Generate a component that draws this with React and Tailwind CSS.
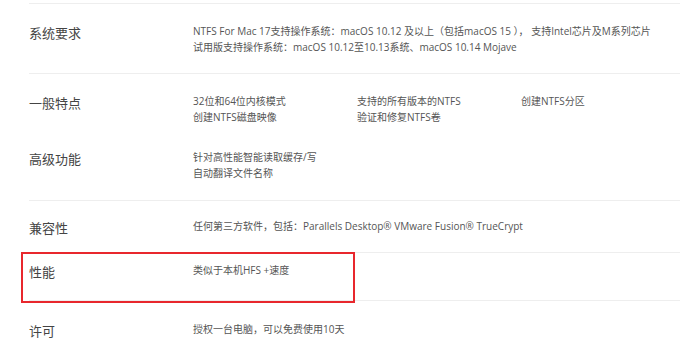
import React from "react"

const font = { fontFamily: '"Noto Sans CJK SC", "Noto Sans", sans-serif' }
const latin = { fontFamily: '"Open Sans", "Noto Sans CJK SC", sans-serif' }

function Row({ label, children, className = "", pad = "pt-[19px]" }) {
  return (
    <div className={`flex ml-[29px] ${className}`}>
      <div className={`w-[164px] shrink-0 text-[13px] leading-[20px] text-[#444] ${pad}`}>
        {label}
      </div>
      <div className={`text-[10px] leading-[16px] text-[#555] ${pad}`} style={latin}>
        {children}
      </div>
    </div>
  )
}

export default function App() {
  return (
    <div className="w-[680px] h-[360px] bg-white overflow-hidden" style={font}>
      <div className="pt-[3px]">
        <Row label="系统要求" className="h-[70px] border-t border-[#eeeeee]">
          <p>NTFS For Mac 17支持操作系统：macOS 10.12 及以上（包括macOS 15 ）， 支持Intel芯片及M系列芯片</p>
          <p>试用版支持操作系统：macOS 10.12至10.13系统、macOS 10.14 Mojave</p>
        </Row>

        <Row label="一般特点" className="h-[57px] border-t border-[#eeeeee]">
          <div className="grid grid-cols-[164px_164px_auto]">
            <p>32位和64位内核模式</p>
            <p>支持的所有版本的NTFS</p>
            <p>创建NTFS分区</p>
            <p>创建NTFS磁盘映像</p>
            <p>验证和修复NTFS卷</p>
          </div>
        </Row>

        <Row label="高级功能" className="h-[70px]">
          <p>针对高性能智能读取缓存/写</p>
          <p>自动翻译文件名称</p>
        </Row>

        <Row label="兼容性" pad="pt-[17px]" className="h-[52px] border-t border-[#eeeeee]">
          <p>任何第三方软件，包括：Parallels Desktop® VMware Fusion® TrueCrypt</p>
        </Row>

        <div className="relative">
          <Row label="性能" pad="pt-[9px]" className="h-[48px] border-t border-[#eeeeee]">
            <p>类似于本机HFS +速度</p>
          </Row>
          {/* highlight frame around the performance row */}
          <div className="absolute left-[21px] top-0 w-[334px] h-[51px] border-2 border-[#e8272d]" />
        </div>

        <Row label="许可" pad="pt-[20px]" className="h-[60px] border-t border-[#eeeeee]">
          <p>授权一台电脑，可以免费使用10天</p>
        </Row>
      </div>
    </div>
  )
}
